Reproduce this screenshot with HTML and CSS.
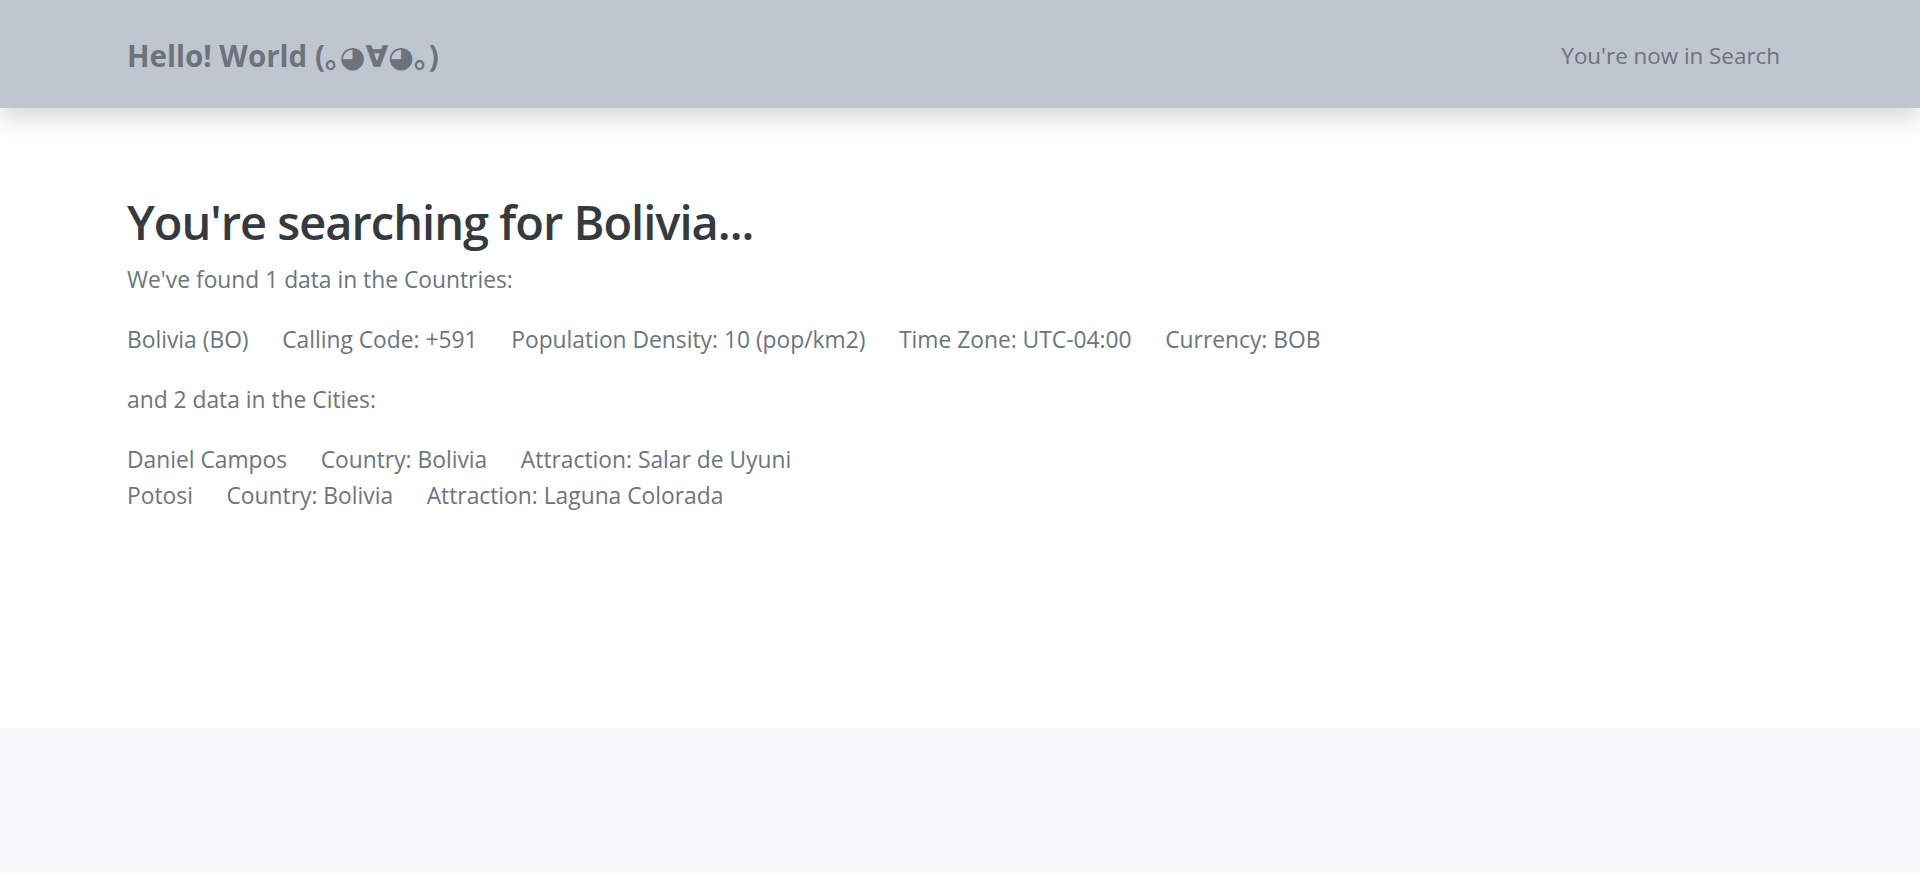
FILE: index.html
```html
<!DOCTYPE html>
<html lang="en">
<head>
<meta charset="utf-8">
<title>Search</title>
<link rel="stylesheet" href="styles.css">
</head>
<body>
<header class="navbar">
  <a class="brand" href="#">Hello! World (｡◕∀◕｡)</a>
  <span class="nav-text">You're now in Search</span>
</header>
<main class="main">
  <h1 class="title">You're searching for Bolivia...</h1>
  <p class="para">We've found 1 data in the Countries:</p>
  <div class="para row">
    <span>Bolivia (BO)</span>
    <span>Calling Code: +591</span>
    <span>Population Density: 10 (pop/km2)</span>
    <span>Time Zone: UTC-04:00</span>
    <span>Currency: BOB</span>
  </div>
  <p class="para">and 2 data in the Cities:</p>
  <div class="para">
    <div class="row">
      <span>Daniel Campos</span>
      <span>Country: Bolivia</span>
      <span>Attraction: Salar de Uyuni</span>
    </div>
    <div class="row">
      <span>Potosi</span>
      <span>Country: Bolivia</span>
      <span>Attraction: Laguna Colorada</span>
    </div>
  </div>
</main>
<footer class="footer"></footer>
</body>
</html>
```
FILE: styles.css
```css
* { box-sizing: border-box; }
html, body { margin: 0; padding: 0; }
body {
  font-family: "Open Sans", "Noto Sans", "DejaVu Sans", "Noto Sans CJK JP", sans-serif;
  font-size: 22.8px;
  line-height: 36px;
  color: #6c757d;
  background: #f8f9fa;
}
.navbar {
  position: relative;
  z-index: 2;
  height: 108px;
  background: #c0c6cf;
  display: flex;
  align-items: center;
  justify-content: space-between;
  padding: 4px 140px 0 127px;
  box-shadow: 0 11px 22px rgba(0, 0, 0, 0.15);
}
.brand {
  font-size: 29.5px;
  font-weight: 700;
  color: #6c737d;
  text-decoration: none;
  line-height: 1.5;
}
.nav-text {
  font-size: 22.4px;
  color: #6d727a;
}
.main {
  background: #ffffff;
  min-height: 620px;
  padding: 86px 127px 0 127px;
}
.title {
  margin: 0 0 12px 0;
  font-size: 47px;
  font-weight: 600;
  letter-spacing: -1px;
  line-height: 1.2;
  color: #343a40;
}
.para {
  margin: 0 0 24px 0;
}
.row {
  display: flex;
  gap: 33.6px;
}
.footer {
  height: 145px;
  background: #f8f9fa;
}
```
